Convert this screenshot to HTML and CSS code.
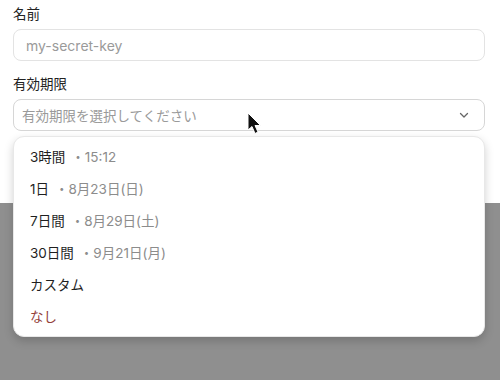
FILE: index.html
```html
<!DOCTYPE html>
<html lang="ja">
<head>
    <meta charset="UTF-8">
    <title>有効期限</title>
    <link rel="stylesheet" href="styles.css">
</head>
<body>
    <div class="dialog">
        <div class="field">
            <label class="label">名前</label>
            <div class="input placeholder">my-secret-key</div>
        </div>
        <div class="field field-select">
            <label class="label">有効期限</label>
            <div class="select">
                <span class="placeholder">有効期限を選択してください</span>
                <svg class="chevron" width="12" height="12" viewBox="0 0 12 12">
                    <path d="M2.5 4.5 L6 8 L9.5 4.5" fill="none" stroke="#666" stroke-width="1.3" stroke-linecap="round" stroke-linejoin="round"/>
                </svg>
            </div>
            <ul class="menu">
                <li>3時間<span class="sub">・15:12</span></li>
                <li>1日<span class="sub">・8月23日(日)</span></li>
                <li>7日間<span class="sub">・8月29日(土)</span></li>
                <li>30日間<span class="sub">・9月21日(月)</span></li>
                <li>カスタム</li>
                <li class="danger">なし</li>
            </ul>
        </div>
    </div>
    <svg class="cursor" width="16" height="24" viewBox="0 0 16 24">
        <path d="M1 1 L1 18 L5 14.5 L8 21.5 L11 20 L8 13.5 L13.5 13.5 Z" fill="#111" stroke="#fff" stroke-width="1"/>
    </svg>
</body>
</html>
```

FILE: styles.css
```css
* {
    margin: 0;
    padding: 0;
    box-sizing: border-box;
}

body {
    font-family: Inter, "Noto Sans CJK JP", sans-serif;
    background: #8f8f8f;
    color: #1f1f1f;
    height: 380px;
    overflow: hidden;
    position: relative;
}

.dialog {
    background: #fff;
    height: 203px;
    padding: 4px 15px 0 13px;
}

.field {
    display: flex;
    flex-direction: column;
    gap: 5px;
    margin-bottom: 13px;
}

.field-select {
    position: relative;
}

.label {
    font-size: 13.5px;
    line-height: 20px;
    color: #222;
}

.input,
.select {
    height: 32px;
    border: 1px solid #e3e3e3;
    border-radius: 8px;
    display: flex;
    align-items: center;
    font-size: 14px;
}

.input {
    padding-left: 12px;
}

.select {
    border-color: #d6d6d6;
    padding: 0 14px 0 8px;
    justify-content: space-between;
}

.placeholder {
    color: #9a9a9a;
}

.select .placeholder {
    font-size: 13.5px;
}

.menu {
    list-style: none;
    position: absolute;
    top: calc(100% + 5px);
    left: 0;
    right: 0;
    background: #fff;
    border: 1px solid #e8e8e8;
    border-radius: 11px;
    padding: 3px 0 4px;
    box-shadow: 0 4px 10px rgba(0, 0, 0, 0.18);
}

.menu li {
    height: 32px;
    display: flex;
    align-items: center;
    padding-left: 16px;
    font-size: 13.5px;
    color: #1f1f1f;
}

.menu .sub {
    color: #8c8c8c;
    font-size: 13.5px;
    margin-left: 6px;
}

.menu .danger {
    color: #93403a;
}

.cursor {
    position: absolute;
    left: 247px;
    top: 112px;
}
```
